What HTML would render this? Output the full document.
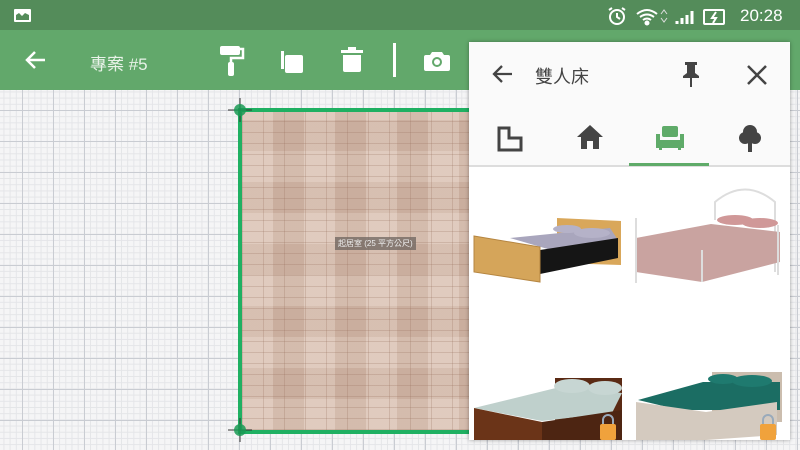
<!DOCTYPE html>
<html><head><meta charset="utf-8"><style>
*{margin:0;padding:0;box-sizing:border-box}
body{width:800px;height:450px;overflow:hidden;position:relative;font-family:"Liberation Sans","Noto Sans CJK TC",sans-serif;
background-color:#f5f5f6;
background-image:linear-gradient(#c9ccd2 1px,transparent 1px),linear-gradient(90deg,#c9ccd2 1px,transparent 1px),linear-gradient(#e4e5e8 1px,transparent 1px),linear-gradient(90deg,#e4e5e8 1px,transparent 1px);
background-size:31px 31px,31px 31px,6.2px 6.2px,6.2px 6.2px;background-position:0 110px,22px 0,0 110px,22px 0}
.status{position:absolute;left:0;top:0;width:800px;height:30px;background:#548c5a;color:#fff}
.bar{position:absolute;left:0;top:30px;width:800px;height:60px;background:#62a86b}
.room{position:absolute;left:238px;top:108px;width:240px;height:326px;border:4px solid #1fb062;
background-color:#d2b9aa;
background-image:repeating-linear-gradient(90deg,rgba(150,110,90,.25) 0 1px,transparent 1px 21px),repeating-linear-gradient(0deg,rgba(150,110,90,.25) 0 1px,transparent 1px 11px),repeating-linear-gradient(90deg,rgba(255,245,238,.18) 0 31px,rgba(170,130,110,.1) 31px 62px),repeating-linear-gradient(0deg,rgba(255,245,238,.15) 0 31px,rgba(170,130,110,.1) 31px 62px)}
.panel{position:absolute;left:469px;top:42px;width:321px;height:398px;background:#fff;box-shadow:0 0 4px rgba(0,0,0,.35)}
.ph{position:absolute;left:0;top:0;width:321px;height:125px;background:#fafafa;border-bottom:2px solid #ddd}
</style></head><body>
<div class="status">
<svg style="position:absolute;left:14px;top:9px" width="17" height="13"><rect width="17" height="13" rx="1" fill="#fff"/><path d="M2 11 L2 6 L5 4 L8 7 L11 4 L15 6 L15 11Z" fill="#548c5a"/></svg>
<svg style="position:absolute;left:605px;top:6px" width="120" height="20" fill="none" stroke="#fff" stroke-width="2">
<circle cx="12" cy="11" r="7"/><path d="M12 7v4l3 2M4 4l3-2M20 4l-3-2"/>
<path d="M32 8q10-8 20 0M35 11q7-5 14 0M38 14q4-3 8 0" /><circle cx="42" cy="17" r="1.5" fill="#fff"/>
<path d="M56 8l3-4l3 4M56 12l3 4l3-4" stroke-width="1" stroke="#ddd"/>
<path d="M72 18v-3M77 18v-6M82 18v-9M87 18v-13" stroke-width="3"/>
<rect x="99" y="4" width="20" height="14" rx="1"/><path d="M111 6l-4 6h4l-3 5" />
</svg>
<div style="position:absolute;left:740px;top:6px;font-size:17px;color:#fff">20:28</div>
</div>
<div class="bar">
<svg style="position:absolute;left:24px;top:20px" width="22" height="20" fill="none" stroke="#fff" stroke-width="2.5"><path d="M21 10H3M11 2L3 10l8 8"/></svg>
<div style="position:absolute;left:90px;top:20px;font-size:17px;color:#e8f2e8">專案 #5</div>
<svg style="position:absolute;left:218px;top:15px" width="28" height="32" fill="#fff"><rect x="2" y="1" width="20" height="9" rx="2"/><path d="M22 4h3v9H13v4" fill="none" stroke="#fff" stroke-width="2.5"/><rect x="10" y="17" width="6" height="14" rx="2"/></svg>
<svg style="position:absolute;left:280px;top:18px" width="24" height="26" fill="#fff"><path d="M1 3v18h3V5h0V3z"/><rect x="5" y="7" width="18" height="18" rx="2"/></svg>
<svg style="position:absolute;left:341px;top:16px" width="22" height="28" fill="#fff"><rect x="0" y="4" width="22" height="3"/><rect x="7" y="1" width="8" height="3"/><path d="M2 9h18v15a2 2 0 0 1-2 2H4a2 2 0 0 1-2-2z"/></svg>
<div style="position:absolute;left:393px;top:13px;width:3px;height:34px;background:#fff"></div>
<svg style="position:absolute;left:424px;top:19px" width="26" height="22"><path d="M8 3h10l2 3h4a2 2 0 0 1 2 2v12a2 2 0 0 1-2 2H2a2 2 0 0 1-2-2V8a2 2 0 0 1 2-2h4z" fill="#fff"/><circle cx="13" cy="13" r="5" fill="#62a86b"/><circle cx="13" cy="13" r="3" fill="#fff"/></svg>
</div>
<div class="room"><div style="position:absolute;left:93px;top:125px;background:rgba(110,100,95,.75);color:#eee;font-size:8px;padding:1px 3px">起居室 (25 平方公尺)</div></div>
<svg style="position:absolute;left:228px;top:98px" width="24" height="24"><path d="M12 0v24M0 12h24" stroke="#333" stroke-width="1"/><circle cx="12" cy="12" r="6" fill="#1a9a55" opacity=".85"/></svg>
<svg style="position:absolute;left:228px;top:418px" width="24" height="24"><path d="M12 0v24M0 12h24" stroke="#333" stroke-width="1"/><circle cx="12" cy="12" r="6" fill="#1a9a55" opacity=".85"/></svg>
<div class="panel">
<div class="ph">
<svg style="position:absolute;left:22px;top:22px" width="22" height="20" fill="none" stroke="#444" stroke-width="2.3"><path d="M21 10H3M11 2L3 10l8 8"/></svg>
<div style="position:absolute;left:66px;top:21px;font-size:18px;color:#444">雙人床</div>
<svg style="position:absolute;left:212px;top:19px" width="20" height="28" fill="#444"><path d="M4 1h12v3h-2v8l4 3v2H2v-2l4-3V4H4z"/><rect x="9" y="17" width="2" height="9"/></svg>
<svg style="position:absolute;left:277px;top:22px" width="22" height="22" stroke="#444" stroke-width="2.5"><path d="M2 2L20 20M20 2L2 20"/></svg>
<svg style="position:absolute;left:28px;top:84px" width="26" height="26" fill="none" stroke="#444" stroke-width="3"><path d="M2 2h10v10h12v12H2z"/></svg>
<svg style="position:absolute;left:107px;top:82px" width="28" height="26" fill="#444"><path d="M14 1L1 13h4v12h6v-8h6v8h6V13h4z"/></svg>
<svg style="position:absolute;left:187px;top:84px" width="28" height="24" fill="#5fab69"><rect x="6" y="0" width="16" height="11" rx="2"/><path d="M0 8h4v6h20V8h4v14h-3v2h-3v-2H6v2H3v-2H0z"/></svg>
<svg style="position:absolute;left:270px;top:82px" width="22" height="28" fill="#444"><circle cx="11" cy="8" r="7"/><circle cx="6" cy="14" r="6"/><circle cx="16" cy="14" r="6"/><rect x="9" y="16" width="4" height="12"/></svg>
<div style="position:absolute;left:160px;top:121px;width:80px;height:3px;background:#5fab69"></div>
</div>
<svg style="position:absolute;left:0;top:127px" width="321" height="271" viewBox="469 169 321 271">
<path d="M557 218l64 3v44l-64-2z" fill="#d9a75a"/>
<path d="M510 238l100-10l8 12l-60 12z" fill="#a9a6bd"/>
<ellipse cx="567" cy="229" rx="14" ry="4" fill="#b5b2c8"/><ellipse cx="592" cy="233" rx="18" ry="5" fill="#b5b2c8"/>
<path d="M540 250l78-12v20l-78 16z" fill="#151515"/>
<path d="M474 236l66 11v35l-66-10z" fill="#d5a55a" stroke="#b58540"/>
<path d="M715 220v-18q30-25 60 0v70" fill="none" stroke="#ddd" stroke-width="2"/>
<path d="M636 238l75-14l69 8v30l-78 20l-66-10z" fill="#c9a3a0"/>
<path d="M636 218v65M702 250v32M778 225v50" stroke="#ddd" stroke-width="2"/>
<ellipse cx="735" cy="220" rx="18" ry="5" fill="#d09898"/><ellipse cx="760" cy="223" rx="18" ry="5" fill="#d09898"/>
<path d="M555 378h67v62h-67z" fill="#5a2a14"/>
<path d="M474 408l90-22l58 7l-10 20l-70 8z" fill="#bfd0cc"/>
<ellipse cx="572" cy="386" rx="18" ry="7" fill="#c7d6d3"/><ellipse cx="605" cy="388" rx="17" ry="7" fill="#c7d6d3"/>
<path d="M474 408l68 14v18h-68z" fill="#6b3418"/><path d="M542 422l80-12v30h-80z" fill="#4d2512"/>
<path d="M712 372h70v50h-70z" fill="#cbbdae"/>
<path d="M638 400l65-18h77v28l-100 0z" fill="#1b6d63"/>
<ellipse cx="723" cy="379" rx="15" ry="5" fill="#1f7a6f"/><ellipse cx="752" cy="381" rx="20" ry="6" fill="#1f7a6f"/>
<path d="M636 402l70 10l71-10v33l-71 5h-70z" fill="#d4cabf"/>
<rect x="600" y="424" width="16" height="16" rx="2" fill="#f0a23c"/><path d="M603 424v-4a5 5 0 0 1 10 0v4" fill="none" stroke="#9ab" stroke-width="2"/>
<rect x="760" y="424" width="16" height="16" rx="2" fill="#f0a23c"/><path d="M763 424v-4a5 5 0 0 1 10 0v4" fill="none" stroke="#9ab" stroke-width="2"/>
</svg>
</div>
</body></html>
